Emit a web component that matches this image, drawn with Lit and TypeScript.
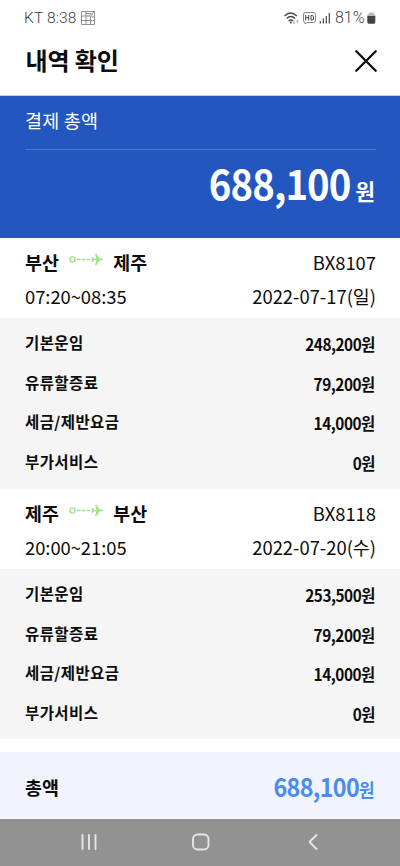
import { LitElement, html, css } from "lit";
import { customElement } from "lit/decorators.js";

interface Leg {
  from: string;
  to: string;
  flight: string;
  time: string;
  date: string;
  fares: [string, string][];
}

const LEGS: Leg[] = [
  {
    from: "부산", to: "제주", flight: "BX8107", time: "07:20~08:35", date: "2022-07-17(일)",
    fares: [["기본운임", "248,200"], ["유류할증료", "79,200"], ["세금/제반요금", "14,000"], ["부가서비스", "0"]],
  },
  {
    from: "제주", to: "부산", flight: "BX8118", time: "20:00~21:05", date: "2022-07-20(수)",
    fares: [["기본운임", "253,500"], ["유류할증료", "79,200"], ["세금/제반요금", "14,000"], ["부가서비스", "0"]],
  },
];

@customElement("app-root")
export class AppRoot extends LitElement {
  static styles = css`
    :host { display: flex; flex-direction: column; box-sizing: border-box; width: 400px; height: 866px; overflow: hidden;
      background: #fff; color: #0c0c0c; font-family: "Noto Sans CJK KR", sans-serif; }
    * { box-sizing: border-box; }
    svg { display: block; flex: none; }
    .status { height: 35px; flex: none; display: flex; align-items: center; padding: 0 24px; color: #404040;
      font: 300 15.5px/20px Roboto, sans-serif; }
    .carrier { letter-spacing: 0.15px; }
    .status .pix { margin-left: 4px; }
    .status .right { margin-left: auto; display: flex; align-items: center; }
    .head { height: 61px; flex: none; display: flex; justify-content: space-between; align-items: center; padding: 0 23px 9px 25.5px;
      border-bottom: 1px solid #c5cde0; }
    .head h1 { margin: -2px 0 0; font-size: 24px; line-height: 36px; font-weight: 700; letter-spacing: -0.1px; }
    .hero { height: 142px; flex: none; background: #2357bf; color: #fff; padding: 9px 24px 0 25px; }
    .hero .label { height: 45px; font-size: 18.5px; line-height: 30px; letter-spacing: 0.2px; border-bottom: 1px solid #4a76cf; }
    .hero .sum { display: flex; justify-content: flex-end; align-items: baseline; font-weight: 700; line-height: 60px; padding: 2px 1px 0 0; }
    .hero .num { font-size: 41px; letter-spacing: -1px; transform: scaleX(.935); transform-origin: 100% 50%; }
    .hero .won { font-size: 21.5px; margin-left: 4.5px; }
    .route { height: 80px; flex: none; padding: 7px 24px 0 25px; font-size: 18.4px; line-height: 34.5px; }
    .line { display: flex; justify-content: space-between; }
    .line + .line { margin-top: -0.6px; }
    .time { letter-spacing: -0.05px; }
    .cities { display: flex; font-weight: 700; letter-spacing: 0.2px; }
    .cities svg { margin: 8px 9.500px 0 8.500px; }
    .fares { height: 171px; flex: none; background: #f5f5f5; padding: 4px 25px 0 25px; font-weight: 700; }
    .fare { display: flex; justify-content: space-between; height: 39.5px; line-height: 40px; font-size: 15.5px; letter-spacing: 0.4px; }
    .fare .amt { font-size: 16.5px; letter-spacing: -0.5px; padding-top: 2px; margin-right: 0.4px; transform: scaleX(.93); transform-origin: 100% 50%; }
    .second { height: 170px; }
    .total { height: 67px; flex: none; margin-top: 13px; background: #f1f4fd; padding: 0 25px; display: flex; justify-content: space-between;
      align-items: center; font-weight: 700; font-size: 18.4px; border-bottom: 1px solid #fafbff; }
    .total > span:first-child { margin-top: 4px; }
    .total .amt { color: #4a8cf0; font-size: 25.5px; letter-spacing: -0.7px; transform: scaleX(.915); transform-origin: 100% 50%; }
    .total .won { font-size: 18.5px; letter-spacing: 0; }
    .nav { flex: 1; background: #929292; }
  `;

  private plane() {
    return html`<svg width="36" height="14" viewBox="0 0 36 14" fill="none" stroke="#9fe58a">
      <circle cx="4.500" cy="6.500" r="2.600" stroke-width="1.400" />
      <path d="M8.800 6.500h3.700M13.800 6.500h3.700M18.800 6.500h3.700" stroke-width="1.300" />
      <path d="M23.500 4h1.200l1.600 1.700h2L27 1h1.500l3.200 4.600h1.600q1.700.200 1.700.900t-1.700.900h-1.600L28.500 12H27l1.300-4.700h-2l-1.600 1.700h-1.200l.800-2.500z" fill="#9fe58a" stroke="none" />
    </svg>`;
  }

  private leg(l: Leg, i: number) {
    return html`
      <section class="route">
        <div class="line"><div class="cities"><span>${l.from}</span>${this.plane()}<span>${l.to}</span></div><span class="flight">${l.flight}</span></div>
        <div class="line"><span class="time">${l.time}</span><span class="date">${l.date}</span></div>
      </section>
      <section class="fares ${i ? "second" : ""}">
        ${l.fares.map(([n, a]) => html`<div class="fare"><span>${n}</span><span class="amt">${a}원</span></div>`)}
      </section>`;
  }

  render() {
    return html`
      <div class="status">
        <span class="carrier">KT 8:38</span>
        <svg class="pix" width="14" height="14" viewBox="0 0 14 14" fill="none" stroke="#777" stroke-width=".8">
          <path d="M.5.500h13v13H.5zM5 .5v13M9.500 5v8.500M.5 5H9M5 9.500h8.500M.5 9.500H5M5 2.500h5M8 5l5.500-4.500M11 3v3h2.500" />
        </svg>
        <div class="right">
          <svg width="83" height="20" viewBox="0 0 83 20" fill="none" stroke="#444">
            <path d="M.5 8q6-6 12.400 0M2.600 10.500q4.200-4 8.400 0M4.600 13q2.200-2 4.400 0" stroke-width="1.200" />
            <circle cx="6.800" cy="14.500" r="1" fill="#444" stroke="none" />
            <path d="M10 12.500v3M9 14.500l1 1.200 1-1.200M13.500 15.500v-3M12.500 13.500l1-1.200 1 1.200" stroke="#999" stroke-width=".7" />
            <path d="M21.500 4.500h8q2 0 2 2v6q0 2-2 2h-6.500l-2 1.500v-1.500q-1.500 0-1.500-2v-6q0-2 1.500-2z" stroke="#777" stroke-width=".9" />
            <path d="M21.700 7v5.500M21.700 9.700h3M24.700 7v5.500M27 7.500h1q1.700 0 1.700 2.300T28 12h-1z" stroke-width="1" />
            <path d="M36.300 13v2.500M39.300 10.500v5M42.300 8v7.500M45.300 5v10.500" stroke-width="1.200" />
            <text x="51" y="15.300" font-family="Roboto, sans-serif" font-weight="300" font-size="16" textLength="29.500" fill="#404040" stroke="none">81%</text>
          </svg>
          <svg width="9" height="20" viewBox="0 0 9 20"><path d="M2.500 4.500h4v1.200h-4zM.3 7.500q0-2 1.500-2h5Q8.300 5.500 8.300 7.500v1H.3z" fill="#bbb" /><path d="M.3 8h8v6q0 1.800-1.500 1.800h-5Q.3 15.800.3 14z" fill="#444" /></svg>
        </div>
      </div>
      <header class="head">
        <h1>내역 확인</h1>
        <svg width="22" height="22" viewBox="0 0 22 22"><path d="M1.300 1.300l19.400 19.400M20.700 1.300L1.300 20.700" stroke="#0c0c0c" stroke-width="2.300" stroke-linecap="round" /></svg>
      </header>
      <section class="hero">
        <div class="label">결제 총액</div>
        <div class="sum"><span class="num">688,100</span><span class="won">원</span></div>
      </section>
      ${LEGS.map((l, i) => this.leg(l, i))}
      <section class="total"><span>총액</span><span class="amt">688,100<span class="won">원</span></span></section>
      <nav class="nav">
        <svg width="400" height="47" viewBox="0 0 400 47" fill="none" stroke="#e6e6e6" stroke-width="1.900" stroke-linecap="round">
          <path d="M82.500 16v14M89 16v14M95.500 16v14" />
          <rect x="193" y="15.500" width="15.500" height="15" rx="4.500" />
          <path d="M316.500 16l-7 7 7 7" stroke-linejoin="round" />
        </svg>
      </nav>`;
  }
}
